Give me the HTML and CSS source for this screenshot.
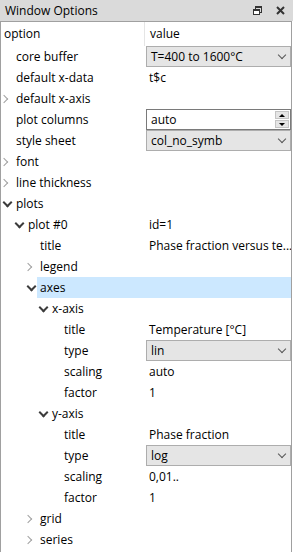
FILE: index.html
```html
<!DOCTYPE html>
<html>

<head>
  <title>Window Options</title>
  <link rel="stylesheet" href="styles.css">
</head>

<body>
  <div class="dock">
    <div class="titlebar">
      <span class="title">Window Options</span>
      <span class="title-buttons">
        <svg class="btn-float" width="11" height="11" viewBox="0 0 11 11">
          <rect x="3.5" y="1.5" width="6" height="6" fill="none" stroke="#333" stroke-width="1" />
          <rect x="3" y="1" width="7" height="2" fill="#333" />
          <rect x="1.5" y="4.5" width="6" height="5" fill="#fff" stroke="#333" stroke-width="1" />
          <rect x="1" y="4" width="7" height="2" fill="#333" />
        </svg>
        <svg class="btn-close" width="11" height="11" viewBox="0 0 11 11">
          <path d="M2 2 L9 9 M9 2 L2 9" stroke="#333" stroke-width="2" />
        </svg>
      </span>
    </div>

    <div class="tree">
      <div class="header">
        <div class="head-name">option</div>
        <div class="head-value">value</div>
      </div>

      <div class="row lvl0">
        <div class="name">core buffer</div>
        <div class="value"><div class="combo">T=400 to 1600°C<span class="combo-arrow"></span></div></div>
      </div>
      <div class="row lvl0">
        <div class="name">default x-data</div>
        <div class="value">t$c</div>
      </div>
      <div class="row lvl0">
        <div class="name"><span class="arrow closed"></span>default x-axis</div>
        <div class="value"></div>
      </div>
      <div class="row lvl0">
        <div class="name">plot columns</div>
        <div class="value">
          <div class="spin">auto
            <span class="spin-buttons">
              <span class="spin-up"></span>
              <span class="spin-down"></span>
            </span>
          </div>
        </div>
      </div>
      <div class="row lvl0">
        <div class="name">style sheet</div>
        <div class="value"><div class="combo">col_no_symb<span class="combo-arrow"></span></div></div>
      </div>
      <div class="row lvl0">
        <div class="name"><span class="arrow closed"></span>font</div>
        <div class="value"></div>
      </div>
      <div class="row lvl0">
        <div class="name"><span class="arrow closed"></span>line thickness</div>
        <div class="value"></div>
      </div>
      <div class="row lvl0">
        <div class="name"><span class="arrow open"></span>plots</div>
        <div class="value"></div>
      </div>
      <div class="row lvl1">
        <div class="name"><span class="arrow open"></span>plot #0</div>
        <div class="value">id=1</div>
      </div>
      <div class="row lvl2">
        <div class="name">title</div>
        <div class="value">Phase fraction versus te...</div>
      </div>
      <div class="row lvl2">
        <div class="name"><span class="arrow closed"></span>legend</div>
        <div class="value"></div>
      </div>
      <div class="row lvl2 selected">
        <div class="name"><span class="arrow open"></span>axes</div>
        <div class="value"></div>
      </div>
      <div class="row lvl3">
        <div class="name"><span class="arrow open"></span>x-axis</div>
        <div class="value"></div>
      </div>
      <div class="row lvl4">
        <div class="name">title</div>
        <div class="value">Temperature [°C]</div>
      </div>
      <div class="row lvl4">
        <div class="name">type</div>
        <div class="value"><div class="combo">lin<span class="combo-arrow"></span></div></div>
      </div>
      <div class="row lvl4">
        <div class="name">scaling</div>
        <div class="value">auto</div>
      </div>
      <div class="row lvl4">
        <div class="name">factor</div>
        <div class="value">1</div>
      </div>
      <div class="row lvl3">
        <div class="name"><span class="arrow open"></span>y-axis</div>
        <div class="value"></div>
      </div>
      <div class="row lvl4">
        <div class="name">title</div>
        <div class="value">Phase fraction</div>
      </div>
      <div class="row lvl4">
        <div class="name">type</div>
        <div class="value"><div class="combo">log<span class="combo-arrow"></span></div></div>
      </div>
      <div class="row lvl4">
        <div class="name">scaling</div>
        <div class="value">0,01..</div>
      </div>
      <div class="row lvl4">
        <div class="name">factor</div>
        <div class="value">1</div>
      </div>
      <div class="row lvl2">
        <div class="name"><span class="arrow closed"></span>grid</div>
        <div class="value"></div>
      </div>
      <div class="row lvl2">
        <div class="name"><span class="arrow closed"></span>series</div>
        <div class="value"></div>
      </div>
    </div>
  </div>
</body>

</html>
```

FILE: styles.css
```css
body {
  margin: 0;
  font-family: 'Open Sans', 'Noto Sans', sans-serif;
  font-size: 12px;
  color: #000;
  background-color: #fff;
  overflow: hidden;
}

.dock {
  width: 293px;
  height: 552px;
  display: flex;
  flex-direction: column;
}

/* Title bar */
.titlebar {
  height: 21px;
  flex-shrink: 0;
  background-color: #dadada;
  display: flex;
  align-items: center;
  justify-content: space-between;
  padding: 0 5px 0 5px;
  box-sizing: border-box;
}

.title {
  font-size: 12px;
  line-height: 21px;
}

.title-buttons {
  display: flex;
  align-items: center;
  gap: 12px;
  padding-right: 2px;
}

.title-buttons svg {
  display: block;
}

/* Tree */
.tree {
  flex-grow: 1;
  border: 1px solid #a0a0a0;
  border-bottom: none;
  width: 292px;
  box-sizing: border-box;
  overflow: hidden;
}

.header {
  height: 24px;
  display: grid;
  grid-template-columns: 144px 1fr;
}

.head-name {
  padding-left: 3px;
  line-height: 24px;
  border-right: 1px solid #e5e5e5;
}

.head-value {
  padding-left: 5px;
  line-height: 24px;
}

.row {
  height: 21px;
  display: grid;
  grid-template-columns: 145px 1fr;
  line-height: 21px;
}

.name {
  position: relative;
  white-space: nowrap;
}

.value {
  padding-left: 3px;
  white-space: nowrap;
  overflow: hidden;
}

.lvl0 .name { padding-left: 15px; }
.lvl1 .name { padding-left: 27px; }
.lvl2 .name { padding-left: 39px; }
.lvl3 .name { padding-left: 51px; }
.lvl4 .name { padding-left: 63px; }

.selected {
  background: linear-gradient(to right, transparent 36px, #cce8ff 36px);
}

/* Branch arrows */
.arrow {
  position: absolute;
  top: 6px;
  width: 9px;
  height: 9px;
}

.lvl0 .arrow { left: 1px; }
.lvl1 .arrow { left: 13px; }
.lvl2 .arrow { left: 25px; }
.lvl3 .arrow { left: 37px; }

.arrow.closed::before {
  content: "";
  position: absolute;
  left: -1px;
  top: 2px;
  width: 5px;
  height: 5px;
  border-right: 1.5px solid #a0a0a0;
  border-bottom: 1.5px solid #a0a0a0;
  transform: rotate(-45deg);
}

.arrow.open::before {
  content: "";
  position: absolute;
  left: 2px;
  top: 0;
  width: 5px;
  height: 5px;
  border-right: 2px solid #3c3c3c;
  border-bottom: 2px solid #3c3c3c;
  transform: rotate(45deg);
}

/* Value editors */
.combo {
  position: relative;
  height: 21px;
  margin-left: -3px;
  padding-left: 4px;
  box-sizing: border-box;
  line-height: 19px;
  background-color: #e5e5e5;
  border: 1px solid #adadad;
}

.combo-arrow {
  position: absolute;
  right: 5px;
  top: 5px;
  width: 5px;
  height: 5px;
  border-right: 1px solid #555;
  border-bottom: 1px solid #555;
  transform: rotate(45deg);
}

.spin {
  position: relative;
  height: 21px;
  margin-left: -3px;
  padding-left: 4px;
  box-sizing: border-box;
  line-height: 19px;
  background-color: #fff;
  border: 1px solid #7a7a7a;
}

.spin-buttons {
  position: absolute;
  right: 1px;
  top: 1px;
  width: 14px;
  height: 17px;
  display: flex;
  flex-direction: column;
  gap: 1px;
}

.spin-up,
.spin-down {
  flex: 1;
  background-color: #e5e5e5;
  border: 1px solid #c4c4c4;
  position: relative;
}

.spin-up::after,
.spin-down::after {
  content: "";
  position: absolute;
  left: 3px;
  width: 0;
  height: 0;
  border-left: 3px solid transparent;
  border-right: 3px solid transparent;
}

.spin-up::after {
  top: 2px;
  border-bottom: 3px solid #000;
}

.spin-down::after {
  top: 2px;
  border-top: 3px solid #000;
}
```
